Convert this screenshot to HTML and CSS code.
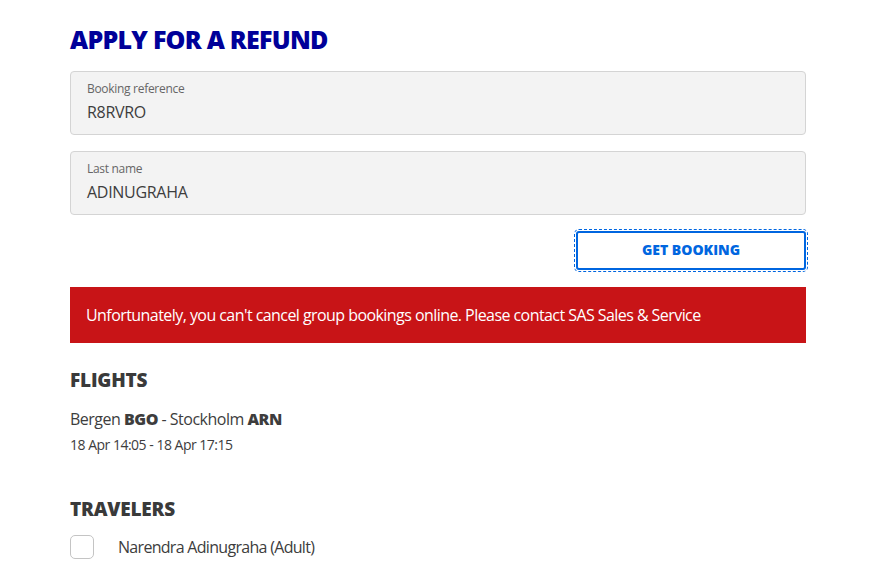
FILE: index.html
```html
<!DOCTYPE html>
<html>
<head>
<meta charset="utf-8">
<link rel="stylesheet" href="styles.css">
</head>
<body>
<main class="page">
  <h1 class="title">APPLY FOR A REFUND</h1>
  <div class="field">
    <span class="field-label">Booking reference</span>
    <span class="field-value">R8RVRO</span>
  </div>
  <div class="field">
    <span class="field-label">Last name</span>
    <span class="field-value">ADINUGRAHA</span>
  </div>
  <div class="actions">
    <button class="btn">GET BOOKING</button>
  </div>
  <div class="alert">Unfortunately, you can't cancel group bookings online. Please contact SAS Sales &amp; Service</div>
  <h2 class="section-title">FLIGHTS</h2>
  <div class="route">Bergen <b>BGO</b> - Stockholm <b>ARN</b></div>
  <div class="times">18 Apr 14:05 - 18 Apr 17:15</div>
  <h2 class="section-title travelers">TRAVELERS</h2>
  <label class="traveler">
    <span class="checkbox"></span>
    <span class="traveler-name">Narendra Adinugraha (Adult)</span>
  </label>
</main>
</body>
</html>
```

FILE: styles.css
```css
* { box-sizing: border-box; }
html, body { margin: 0; padding: 0; background: #fff; }
body {
  font-family: "Open Sans", "Liberation Sans", sans-serif;
  color: #3d3d3d;
}
.page {
  width: 736px;
  margin-left: 70px;
  padding-top: 25px;
  display: flex;
  flex-direction: column;
}
.title {
  margin: 0 0 17px;
  font-size: 25px;
  line-height: 29px;
  font-weight: 800;
  color: #000099;
  letter-spacing: -0.75px;
}
.field {
  height: 64px;
  background: #f3f3f3;
  border: 1px solid #d4d4d4;
  border-radius: 4px;
  padding: 9px 16px 0;
  display: flex;
  flex-direction: column;
  margin-bottom: 16px;
}
.field-label {
  font-size: 12px;
  line-height: 16px;
  color: #666;
  letter-spacing: -0.3px;
}
.field-value {
  margin-top: 4px;
  font-size: 16px;
  line-height: 22px;
  color: #3d3d3d;
  letter-spacing: -0.3px;
}
.actions {
  display: flex;
  justify-content: flex-end;
  margin-bottom: 17px;
}
.btn {
  width: 230px;
  height: 39px;
  background: #fff;
  border: 2px solid #0066e0;
  border-radius: 3px;
  color: #0066e0;
  font-family: inherit;
  font-weight: 800;
  font-size: 14px;
  letter-spacing: 0;
  padding: 0 0 3px;
  outline: 1px dashed #0066e0;
  outline-offset: 1px;
}
.alert {
  background: #c81417;
  color: #fff;
  height: 56px;
  padding: 0 16px;
  display: flex;
  align-items: center;
  font-size: 16px;
  letter-spacing: -0.56px;
  margin-bottom: 24px;
}
.section-title {
  margin: 0;
  font-size: 19px;
  line-height: 26px;
  font-weight: 800;
  color: #3a3a3a;
  letter-spacing: -0.2px;
}
.route {
  margin-top: 15px;
  font-size: 16px;
  line-height: 22px;
  letter-spacing: -0.5px;
}
.route b { font-weight: 800; }
.times {
  margin-top: 5px;
  font-size: 14px;
  line-height: 20px;
  letter-spacing: -0.5px;
}
.travelers { margin-top: 41px; }
.traveler {
  margin-top: 13px;
  display: flex;
  align-items: center;
}
.checkbox {
  width: 24px;
  height: 24px;
  border: 1px solid #c4c4c4;
  border-radius: 5px;
  background: #fff;
  flex: none;
}
.traveler-name {
  margin-left: 24px;
  font-size: 16px;
  letter-spacing: -0.7px;
}
```
